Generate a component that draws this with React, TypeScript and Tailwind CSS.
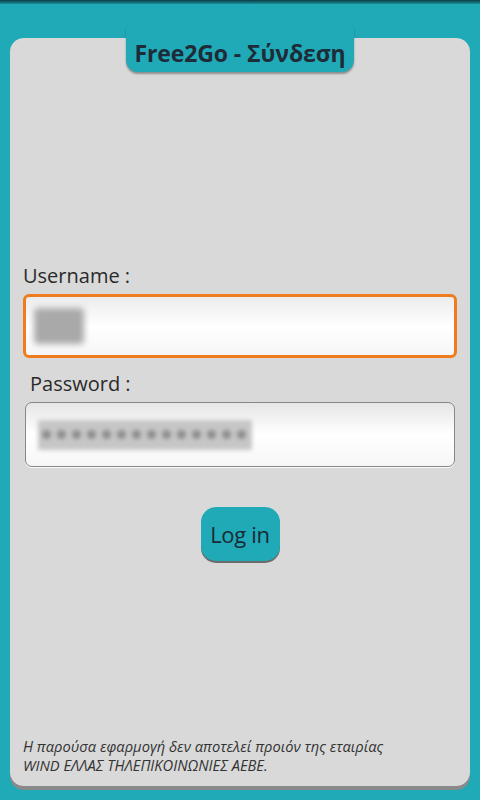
import React from "react";

const font = { fontFamily: '"Open Sans", "Noto Sans", "DejaVu Sans", sans-serif' };

export default function App() {
  return (
    <div className="w-[480px] h-[800px] bg-[#20a9b6] flex flex-col overflow-hidden" style={font}>
      <div className="h-[4px] bg-gradient-to-b from-[#0b3f46] to-[#1a8c98]" />
      <div className="flex-1 px-[10px] pt-[34px] pb-[14px]">
        <div className="h-full bg-[#d9d9d9] rounded-[14px] shadow-[0_4px_0_#8a8a8a] flex flex-col px-[13px]">
          <div className="self-center -mt-[16px] w-[228px] h-[50px] bg-[#20a9b6] rounded-b-[12px] rounded-t-[8px] shadow-[0_2px_2px_rgba(0,0,0,0.35)] flex items-end justify-center pb-[7px]">
            <span className="text-[23px] font-bold text-[#1e2b38] leading-none tracking-[-0.1px]">Free2Go - Σύνδεση</span>
          </div>

          <div className="mt-[194px] text-[20px] text-[#2a2a2a] leading-none">Username :</div>
          <div className="mt-[8px] h-[64px] rounded-[6px] border-[3px] border-[#ef7d1e] bg-gradient-to-b from-[#ececec] via-white to-[#f6f6f6] flex items-center pl-[8px]">
            <div className="w-[50px] h-[36px] bg-[#a9a9a9] blur-[3px] rounded-sm" />
          </div>

          <div className="mt-[16px] ml-[7px] text-[20px] text-[#2a2a2a] leading-none">Password :</div>
          <div className="mt-[8px] mx-[2px] h-[65px] rounded-[7px] border border-[#888] bg-gradient-to-b from-[#e6e6e6] via-white to-[#f6f6f6] flex items-center pl-[12px] shadow-[0_1px_0_#fafafa]">
            <div className="w-[214px] h-[30px] bg-[#c6c6c6] blur-[2px] flex items-center px-[4px] gap-[6px]">
              {Array.from({ length: 14 }).map((_, i) => (
                <span key={i} className="w-[9px] h-[9px] rounded-full bg-[#8c8c8c]" />
              ))}
            </div>
          </div>

          <button className="self-center mt-[40px] w-[79px] h-[54px] rounded-[15px] bg-[#20a9b6] shadow-[0_2px_0_#6c6c6c] text-[22px] text-[#1a2a36] leading-none tracking-[-0.3px]">
            Log in
          </button>

          <div className="mt-auto mb-[11px] text-[14.7px] italic text-[#333] leading-[19px]">
            Η παρούσα εφαρμογή δεν αποτελεί προιόν της εταιρίας
            <br />
            WIND ΕΛΛΑΣ ΤΗΛΕΠΙΚΟΙΝΩΝΙΕΣ ΑΕΒΕ.
          </div>
        </div>
      </div>
    </div>
  );
}
